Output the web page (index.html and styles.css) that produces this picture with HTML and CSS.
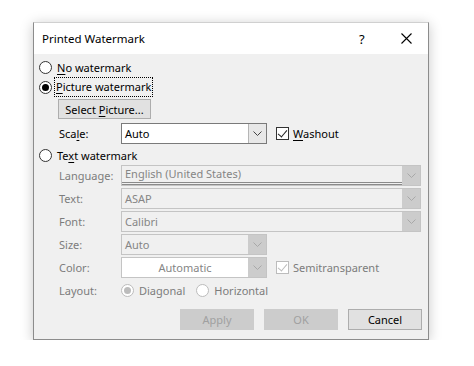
FILE: index.html
```html
<!DOCTYPE html>
<html lang="en">
<head>
    <meta charset="UTF-8">
    <title>Printed Watermark</title>
    <link rel="stylesheet" href="styles.css">
</head>
<body>
    <div class="dialog">
        <div class="titlebar">
            <span class="title">Printed Watermark</span>
            <span class="help">?</span>
            <span class="close">
                <svg width="11" height="11" viewBox="0 0 11 11"><path d="M0.5 0.5 L10.5 10.5 M10.5 0.5 L0.5 10.5" stroke="#000" stroke-width="1.1" fill="none"/></svg>
            </span>
        </div>

        <div class="content">
            <div class="option">
                <span class="radio"></span>
                <span><u>N</u>o watermark</span>
            </div>
            <div class="option">
                <span class="radio checked"></span>
                <span class="focus"><u>P</u>icture watermark</span>
            </div>

            <div class="sub">
                <button class="btn select-btn">Select <u>P</u>icture...</button>
                <div class="scale-row">
                    <span class="label">Sca<u>l</u>e:</span>
                    <div class="combo">
                        <span class="combo-text">Auto</span>
                        <span class="arrow">
                            <svg width="9" height="6" viewBox="0 0 9 6"><path d="M0.5 0.5 L4.5 4.5 L8.5 0.5" stroke="#444" fill="none"/></svg>
                        </span>
                    </div>
                    <span class="check checked"></span>
                    <span><u>W</u>ashout</span>
                </div>
            </div>

            <div class="option text-option">
                <span class="radio"></span>
                <span>Te<u>x</u>t watermark</span>
            </div>

            <div class="sub grid">
                <span class="label off">Language:</span>
                <div class="combo wide disabled lang">
                    <span class="combo-text">English (United States)</span>
                    <span class="arrow"><svg width="9" height="6" viewBox="0 0 9 6"><path d="M0.5 0.5 L4.5 4.5 L8.5 0.5" stroke="#a8a8a8" fill="none"/></svg></span>
                </div>

                <span class="label off">Text:</span>
                <div class="combo wide disabled">
                    <span class="combo-text">ASAP</span>
                    <span class="arrow"><svg width="9" height="6" viewBox="0 0 9 6"><path d="M0.5 0.5 L4.5 4.5 L8.5 0.5" stroke="#a8a8a8" fill="none"/></svg></span>
                </div>

                <span class="label off">Font:</span>
                <div class="combo wide disabled">
                    <span class="combo-text">Calibri</span>
                    <span class="arrow"><svg width="9" height="6" viewBox="0 0 9 6"><path d="M0.5 0.5 L4.5 4.5 L8.5 0.5" stroke="#a8a8a8" fill="none"/></svg></span>
                </div>

                <span class="label off">Size:</span>
                <div class="combo disabled">
                    <span class="combo-text">Auto</span>
                    <span class="arrow"><svg width="9" height="6" viewBox="0 0 9 6"><path d="M0.5 0.5 L4.5 4.5 L8.5 0.5" stroke="#a8a8a8" fill="none"/></svg></span>
                </div>

                <span class="label off">Color:</span>
                <div class="color-row">
                    <div class="combo disabled white">
                        <span class="combo-text center">Automatic</span>
                        <span class="arrow"><svg width="9" height="6" viewBox="0 0 9 6"><path d="M0.5 0.5 L4.5 4.5 L8.5 0.5" stroke="#a8a8a8" fill="none"/></svg></span>
                    </div>
                    <span class="check checked off-box"></span>
                    <span class="off">Semitransparent</span>
                </div>

                <span class="label off">Layout:</span>
                <div class="layout-row">
                    <span class="radio checked off-box"></span>
                    <span class="off">Diagonal</span>
                    <span class="radio off-box horiz"></span>
                    <span class="off">Horizontal</span>
                </div>
            </div>

            <div class="buttons">
                <button class="btn dim">Apply</button>
                <button class="btn dim">OK</button>
                <button class="btn">Cancel</button>
            </div>
        </div>
    </div>
</body>
</html>
```

FILE: styles.css
```css
* {
    margin: 0;
    padding: 0;
    box-sizing: border-box;
}

body {
    background: #fff;
    font-family: "Noto Sans", "Open Sans", sans-serif;
    font-size: 11px;
    color: #000;
}

.dialog {
    width: 396px;
    margin: 22px 0 0 33px;
    border: 1px solid #8c8c8c;
    border-top-color: #d0d0d0;
    background: #f0f0f0;
    box-shadow: 0 2px 12px rgba(0, 0, 0, 0.22);
}

.titlebar {
    height: 31px;
    background: #fff;
    display: flex;
    align-items: center;
    padding-left: 8px;
    font-size: 11.5px;
}

.title {
    flex: 1;
}

.help {
    width: 42px;
    font-size: 13px;
}

.close {
    width: 27px;
    display: flex;
    align-items: center;
}

.content {
    padding: 3px 6px 9px 5px;
}

u {
    text-decoration: underline;
    text-underline-offset: 2px;
}

.option {
    height: 20px;
    display: flex;
    align-items: center;
    gap: 5px;
}

.radio {
    width: 13px;
    height: 13px;
    border: 1px solid #333;
    border-radius: 50%;
    background: #fff;
    display: flex;
    align-items: center;
    justify-content: center;
    flex-shrink: 0;
}

.radio.checked::after {
    content: "";
    width: 7px;
    height: 7px;
    border-radius: 50%;
    background: #000;
}

.radio.off-box {
    border-color: #bcbcbc;
}

.radio.off-box.checked::after {
    background: #bcbcbc;
}

.focus {
    outline: 1px dotted #000;
    outline-offset: 0;
    padding: 1px 1px 2px 1px;
    margin-left: -2px;
}

.sub {
    margin-left: 20px;
}

.btn {
    font-family: inherit;
    font-size: 11px;
    height: 21px;
    background: #e1e1e1;
    border: 1px solid #adadad;
    color: #000;
}

.select-btn {
    margin-top: 2px;
    margin-left: -1px;
    width: 93px;
    height: 20px;
}

.scale-row {
    margin-top: 4px;
    height: 21px;
    display: flex;
    align-items: center;
}

.label {
    width: 62px;
    flex-shrink: 0;
}

.off {
    color: #7c7c7c;
}

.combo {
    width: 146px;
    height: 21px;
    border: 1px solid #7a7a7a;
    background: #fff;
    display: flex;
    align-items: center;
}

.combo.wide {
    width: 300px;
}

.combo-text {
    flex: 1;
    padding-left: 3px;
}

.combo-text.center {
    text-align: center;
    padding-left: 0;
}

.arrow {
    width: 18px;
    height: 19px;
    border-left: 1px solid #b5b5b5;
    background: #e8e8e8;
    display: flex;
    align-items: center;
    justify-content: center;
}

.combo.disabled {
    border-color: #c4c4c4;
    background: #f0f0f0;
    color: #858585;
}

.combo.disabled.white {
    background: #fff;
}

.combo.disabled .arrow {
    background: #cccccc;
    border-left-color: #cccccc;
}

.combo.lang .combo-text {
    height: 19px;
    line-height: 15px;
    border-bottom: 3px double #8a8a8a;
}

.check {
    width: 13px;
    height: 13px;
    border: 1px solid #333;
    background: #fff;
    margin: 0 4px 0 9px;
    position: relative;
    flex-shrink: 0;
}

.check.checked::after {
    content: "";
    position: absolute;
    left: 3px;
    top: 0px;
    width: 4px;
    height: 8px;
    border: solid #222;
    border-width: 0 1px 1px 0;
    transform: rotate(40deg);
}

.check.off-box {
    border-color: #bcbcbc;
}

.check.off-box::after {
    border-color: #bcbcbc;
}

.text-option {
    margin-top: 1px;
}

.grid {
    display: grid;
    grid-template-columns: 62px auto;
    row-gap: 2px;
    align-items: center;
}

.grid .combo {
    height: 21px;
}

.color-row,
.layout-row {
    display: flex;
    align-items: center;
}

.layout-row {
    height: 21px;
    gap: 5px;
}

.radio.horiz {
    margin-left: 6px;
}

.buttons {
    margin-top: 8px;
    display: flex;
    justify-content: flex-end;
    gap: 10px;
}

.buttons .btn {
    width: 74px;
}

.btn.dim {
    background: #cccccc;
    border-color: #cccccc;
    color: #a0a0a0;
}
```
